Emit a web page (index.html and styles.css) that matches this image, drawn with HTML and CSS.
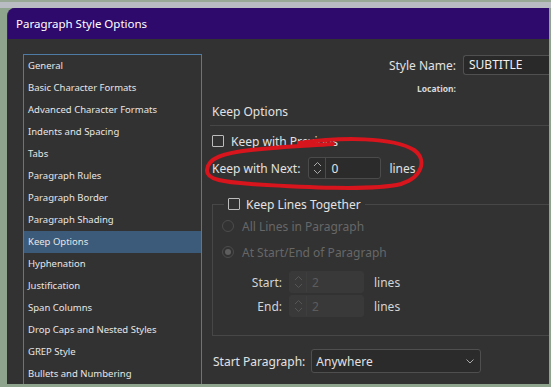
FILE: index.html
```html
<!DOCTYPE html>
<html lang="en">
<head>
  <meta charset="UTF-8" />
  <title>Paragraph Style Options</title>
  <link rel="stylesheet" href="styles.css">
</head>
<body>

  <div class="window">
    <div class="titlebar">Paragraph Style Options</div>

    <div class="dialog">
      <div class="sidebar">
        <ul class="category-list">
          <li>General</li>
          <li>Basic Character Formats</li>
          <li>Advanced Character Formats</li>
          <li>Indents and Spacing</li>
          <li>Tabs</li>
          <li>Paragraph Rules</li>
          <li>Paragraph Border</li>
          <li>Paragraph Shading</li>
          <li class="selected">Keep Options</li>
          <li>Hyphenation</li>
          <li>Justification</li>
          <li>Span Columns</li>
          <li>Drop Caps and Nested Styles</li>
          <li>GREP Style</li>
          <li>Bullets and Numbering</li>
        </ul>
      </div>

      <div class="panel">
        <div class="name-row">
          <span class="name-label">Style Name:</span>
          <div class="name-input">SUBTITLE</div>
        </div>
        <div class="location">Location:</div>

        <div class="section-title">Keep Options</div>
        <div class="rule"></div>

        <div class="check-row">
          <span class="checkbox"></span>
          <span>Keep with Previous</span>
        </div>

        <div class="next-row">
          <span>Keep with Next:</span>
          <div class="spinner">
            <span class="arrows">
              <svg width="9" height="14" viewBox="0 0 9 14"><path d="M1 5 L4.5 1.5 L8 5 M1 9 L4.5 12.5 L8 9" fill="none" stroke="#aaa" stroke-width="1"/></svg>
            </span>
            <span class="value">0</span>
          </div>
          <span class="unit">lines</span>
        </div>

        <fieldset class="group">
          <legend class="group-title">
            <span class="checkbox"></span>
            <span>Keep Lines Together</span>
          </legend>
          <div class="radio-row first">
            <span class="radio"></span>
            <span>All Lines in Paragraph</span>
          </div>
          <div class="radio-row">
            <span class="radio checked"></span>
            <span>At Start/End of Paragraph</span>
          </div>
          <div class="count-row first">
            <span class="count-label">Start:</span>
            <div class="spinner disabled">
              <span class="arrows">
                <svg width="9" height="14" viewBox="0 0 9 14"><path d="M1 5 L4.5 1.5 L8 5 M1 9 L4.5 12.5 L8 9" fill="none" stroke="#555" stroke-width="1"/></svg>
              </span>
              <span class="value">2</span>
            </div>
            <span class="unit">lines</span>
          </div>
          <div class="count-row">
            <span class="count-label">End:</span>
            <div class="spinner disabled">
              <span class="arrows">
                <svg width="9" height="14" viewBox="0 0 9 14"><path d="M1 5 L4.5 1.5 L8 5 M1 9 L4.5 12.5 L8 9" fill="none" stroke="#555" stroke-width="1"/></svg>
              </span>
              <span class="value">2</span>
            </div>
            <span class="unit">lines</span>
          </div>
        </fieldset>

        <div class="start-row">
          <span>Start Paragraph:</span>
          <div class="select">
            <span>Anywhere</span>
            <svg width="8" height="5" viewBox="0 0 8 5"><path d="M0.5 0.5 L4 4 L7.5 0.5" fill="none" stroke="#aaa" stroke-width="1"/></svg>
          </div>
        </div>
      </div>
    </div>

    <!-- red marker drawn over the screenshot -->
    <svg class="marker" width="541" height="387" viewBox="7 0 541 387">
      <path d="M298 143 C 340 137, 392 137, 413 150 C 426 159, 422 177, 400 184 C 370 191, 300 187, 250 184 C 224 182, 205 180, 206 170 C 207 158, 222 153, 250 150 C 276 147, 302 146, 332 144"
            fill="none" stroke="#d8141c" stroke-width="4" stroke-linecap="round" stroke-linejoin="round"/>
    </svg>
  </div>

</body>
</html>
```

FILE: styles.css
```css
body {
  margin: 0;
  height: 387px;
  overflow: hidden;
  font-family: 'Noto Sans', 'Open Sans', sans-serif;
  background: linear-gradient(to bottom, #98a996 0, #98a996 2px, #b9bcc2 2px, #b9bcc2 8px, #8fa48d 8px);
}

.window {
  position: relative;
  margin: 8px 0 0 7px;
  width: 541px;
  height: 376px;
  background-color: #323232;
  border-left: 1px solid #3c1b7a;
  border-top-left-radius: 8px;
  overflow: hidden;
  color: #e2e2e2;
}

.titlebar {
  height: 31px;
  line-height: 31px;
  padding-left: 8px;
  background-color: #2f0a6d;
  color: #fff;
  font-size: 11.5px;
}

.dialog {
  display: flex;
  gap: 8px;
}

.sidebar {
  padding: 15px 0 0 15px;
}

.category-list {
  list-style: none;
  margin: 0;
  padding: 0;
  width: 177px;
  height: 340px;
  border: 1px solid #4e7ba6;
  border-bottom: none;
}

.category-list li {
  height: 22px;
  line-height: 21px;
  padding-left: 4px;
  font-size: 9.5px;
  color: #e6e6e6;
}

.category-list li.selected {
  background-color: #3c5a79;
}

.panel {
  flex: 1;
  padding-top: 15px;
  font-size: 12px;
}

.name-row {
  display: flex;
  justify-content: flex-end;
  align-items: center;
  gap: 7px;
  margin-top: 1px;
  height: 20px;
}

.name-input {
  width: 80px;
  height: 18px;
  line-height: 18px;
  padding-left: 5px;
  background-color: #292929;
  border: 1px solid #505050;
  border-right: none;
  border-radius: 3px 0 0 3px;
  color: #f0f0f0;
}

.location {
  margin-top: 7px;
  height: 14px;
  line-height: 14px;
  padding-right: 93px;
  text-align: right;
  font-size: 8.5px;
  font-weight: bold;
  color: #d8d8d8;
}

.section-title {
  margin-top: 7px;
  height: 18px;
  line-height: 18px;
  padding-left: 2px;
}

.rule {
  margin-top: 4px;
  height: 1px;
  background-color: #464646;
}

.check-row {
  display: flex;
  align-items: center;
  gap: 7px;
  margin-top: 8px;
  height: 14px;
  padding-left: 2px;
}

.checkbox {
  width: 10px;
  height: 10px;
  border: 1px solid #bcbcbc;
  border-radius: 1px;
}

.next-row {
  display: flex;
  align-items: center;
  margin-top: 9px;
  height: 22px;
  padding-left: 2px;
}

.spinner {
  display: flex;
  align-items: center;
  width: 71px;
  height: 20px;
  margin-left: 8px;
  border: 1px solid #4b4b4b;
  border-radius: 3px;
  background-color: #2b2b2b;
}

.spinner .arrows {
  display: flex;
  align-items: center;
  justify-content: center;
  width: 16px;
  height: 100%;
  border-right: 1px solid #4b4b4b;
}

.spinner .value {
  padding-left: 5px;
}

.spinner.disabled {
  width: 73px;
  margin-left: 7px;
  border-color: #393939;
  background-color: #393939;
  color: #5c5c5c;
}

.spinner.disabled .arrows {
  border-right-color: #3e3e3e;
}

.unit {
  margin-left: 8px;
}

.group {
  margin: 18px 0 0 2px;
  padding: 0 0 18px 0;
  border: 1px solid #474747;
  border-right: none;
  min-width: 0;
}

.group-title {
  display: flex;
  align-items: center;
  gap: 6px;
  height: 14px;
  margin-left: 11px;
  padding: 0 4px;
}

.radio-row {
  display: flex;
  align-items: center;
  gap: 8px;
  height: 14px;
  margin-top: 12px;
  padding-left: 9px;
  color: #676767;
}

.radio-row.first {
  margin-top: 8px;
}

.radio {
  width: 10px;
  height: 10px;
  border: 1px solid #4c4c4c;
  border-radius: 50%;
  display: flex;
  align-items: center;
  justify-content: center;
}

.radio.checked::after {
  content: "";
  width: 6px;
  height: 6px;
  border-radius: 50%;
  background-color: #5e5e5e;
}

.count-row {
  display: flex;
  align-items: center;
  height: 22px;
  margin-top: 2px;
  color: #d4d4d4;
}

.count-row.first {
  margin-top: 12px;
}

.count-label {
  width: 69px;
  text-align: right;
}

.count-row .unit {
  margin-left: 10px;
}

.start-row {
  display: flex;
  align-items: center;
  gap: 6px;
  margin-top: 13px;
  height: 24px;
  padding-left: 3px;
}

.select {
  display: flex;
  align-items: center;
  justify-content: space-between;
  width: 158px;
  height: 22px;
  padding: 0 6px 0 4px;
  border: 1px solid #4f4f4f;
  border-radius: 3px;
  background-color: #2b2b2b;
}

.marker {
  position: absolute;
  left: 0;
  top: -8px;
  pointer-events: none;
}
```
